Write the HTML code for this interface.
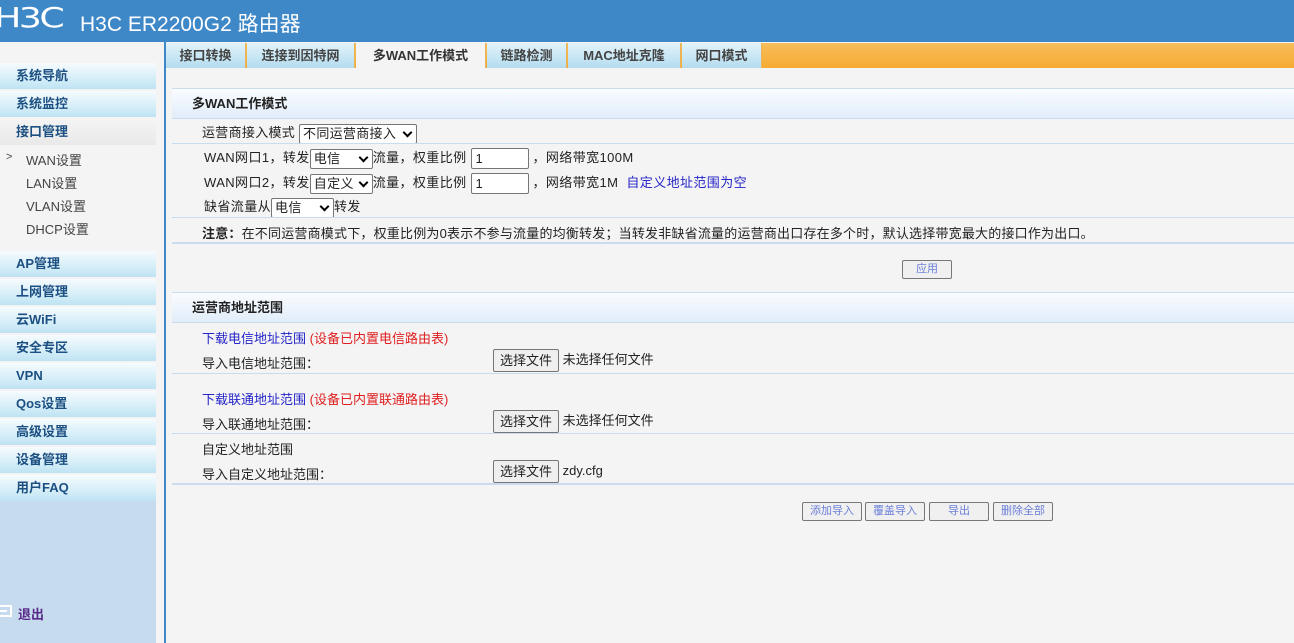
<!DOCTYPE html>
<html><head><meta charset="utf-8"><style>
*{margin:0;padding:0;box-sizing:border-box}
body{width:1294px;height:643px;overflow:hidden;background:#f4f4f4;font-family:"Liberation Sans","Noto Sans CJK SC",sans-serif;font-size:13px;color:#222;position:relative}
.a{position:absolute;white-space:nowrap}
#hd{left:0;top:0;width:1294px;height:42px;background:#3f88c8}
#sb{left:0;top:42px;width:156px;height:601px;background:#f4f4f4}
.mi{position:absolute;left:0;width:156px;height:26px;background:linear-gradient(#f6fbfe,#d5eef8 60%,#bfe3f3);color:#1c4f82;font-weight:bold;padding-left:16px;line-height:26px;font-size:13px}
.si{position:absolute;left:26px;color:#444;font-size:13px}
#vl{left:164px;top:42px;width:2px;height:601px;background:#3f88c8}
.tab{position:absolute;top:43px;height:25px;background:linear-gradient(#e3f3fa,#b3dcef);color:#444;font-weight:bold;text-align:center;line-height:25px;border-right:1px solid #e8b35a}
.pn{position:absolute;left:172px;width:1122px;border-top:1px solid #c8dcee}
.ph{height:30px;background:linear-gradient(#fafcff,#e1edfa);font-weight:bold;padding-left:20px;line-height:30px;border-bottom:1px solid #c8dcee;font-size:13px}
.ln{position:absolute;left:172px;width:1122px;height:1px;background:#c8dcee}
.sel{display:inline-block;border:1px solid #767676;border-radius:2px;background:#fff;height:20px;line-height:18px;padding-left:3px;vertical-align:middle;position:relative}
.sel:after{content:"";position:absolute;right:5px;top:4px;width:5px;height:5px;border-right:2px solid #000;border-bottom:2px solid #000;transform:rotate(45deg)}
.inp{display:inline-block;border:1px solid #767676;background:#fff;height:21px;width:58px;line-height:19px;padding-left:4px;vertical-align:middle;border-radius:2px}
.btn{position:absolute;border:1px solid #777;border-radius:2px;background:#f0f0f0;color:#6c7fd8;font-size:11px;text-align:center;line-height:17px;height:19px}
.fb{display:inline-block;border:1px solid #767676;border-radius:2px;background:#efefef;padding:0 6px;height:23px;line-height:21px;vertical-align:middle}
</style></head><body>
<div id="hd" class="a">
 <div class="a" style="left:-6px;top:1px;color:#fff;font-size:28px;transform:scaleX(1.3);transform-origin:left;font-family:'DejaVu Sans',sans-serif;letter-spacing:-2px">H3C</div>
 <div class="a" style="left:80px;top:8px;color:#fff;font-size:21px">H3C ER2200G2 路由器</div>
</div>
<div id="sb" class="a">
 <div class="a" style="left:0;top:458px;width:156px;height:143px;background:#c6dbee"></div>
 <div class="mi" style="top:21px">系统导航</div>
 <div class="mi" style="top:49px">系统监控</div>
 <div class="mi" style="top:77px;background:linear-gradient(#f4f4f4,#e9e9e9);">接口管理</div>
 <div class="si" style="left:6px;top:109px;font-size:11px">&gt;</div>
 <div class="si" style="top:108px">WAN设置</div>
 <div class="si" style="top:131px">LAN设置</div>
 <div class="si" style="top:154px">VLAN设置</div>
 <div class="si" style="top:177px">DHCP设置</div>
 <div class="mi" style="top:209px">AP管理</div>
 <div class="mi" style="top:237px">上网管理</div>
 <div class="mi" style="top:265px">云WiFi</div>
 <div class="mi" style="top:293px">安全专区</div>
 <div class="mi" style="top:321px">VPN</div>
 <div class="mi" style="top:349px">Qos设置</div>
 <div class="mi" style="top:377px">高级设置</div>
 <div class="mi" style="top:405px">设备管理</div>
 <div class="mi" style="top:433px">用户FAQ</div>
 <div class="a" style="left:0;top:563px;width:12px;height:12px;border:2px solid #fff;border-left:none"></div>
 <div class="a" style="left:0;top:568px;width:7px;height:2px;background:#fff"></div>
 <div class="a" style="left:18px;top:562px;color:#5a2a8a;font-weight:bold;font-size:13px">退出</div>
</div>
<div id="vl" class="a"></div>
<div class="a" style="left:166px;top:43px;width:1128px;height:25px;background:linear-gradient(#f8bd5a,#f6ab32)"></div>
<div class="tab" style="left:166px;width:80px">接口转换</div>
<div class="tab" style="left:247px;width:108px">连接到因特网</div>
<div class="tab" style="left:356px;width:130px;background:#f4f4f4;color:#333">多WAN工作模式</div>
<div class="tab" style="left:487px;width:80px">链路检测</div>
<div class="tab" style="left:568px;width:113px">MAC地址克隆</div>
<div class="tab" style="left:682px;width:80px">网口模式</div>

<div class="pn" style="top:88px"><div class="ph">多WAN工作模式</div></div>
<div class="a" style="left:202px;top:122px;letter-spacing:0.3px">运营商接入模式 <span class="sel" style="width:118px">不同运营商接入</span></div>
<div class="ln" style="top:143px"></div>
<div class="a" style="left:204px;top:147px;letter-spacing:0.4px">WAN网口1，转发<span class="sel" style="width:63px">电信</span>流量，权重比例 <span class="inp">1</span> ，网络带宽100M</div>
<div class="a" style="left:204px;top:172px;letter-spacing:0.4px">WAN网口2，转发<span class="sel" style="width:63px">自定义</span>流量，权重比例 <span class="inp">1</span> ，网络带宽1M &nbsp;<span style="color:#2525c8">自定义地址范围为空</span></div>
<div class="a" style="left:204px;top:196px;letter-spacing:0.4px">缺省流量从<span class="sel" style="width:63px">电信</span>转发</div>
<div class="ln" style="top:217px"></div>
<div class="a" style="left:202px;top:223px;letter-spacing:0.2px"><b>注意：</b>在不同运营商模式下，权重比例为0表示不参与流量的均衡转发；当转发非缺省流量的运营商出口存在多个时，默认选择带宽最大的接口作为出口。</div>
<div class="ln" style="top:242px;height:2px"></div>
<div class="btn" style="left:902px;top:260px;width:50px">应用</div>

<div class="pn" style="top:292px"><div class="ph">运营商地址范围</div></div>
<div class="a" style="left:202px;top:328px"><span style="color:#2525c8">下载电信地址范围</span> <span style="color:#e02020">(设备已内置电信路由表)</span></div>
<div class="a" style="left:202px;top:353px">导入电信地址范围：</div>
<div class="a" style="left:493px;top:349px"><span class="fb">选择文件</span> 未选择任何文件</div>
<div class="ln" style="top:373px"></div>
<div class="a" style="left:202px;top:389px"><span style="color:#2525c8">下载联通地址范围</span> <span style="color:#e02020">(设备已内置联通路由表)</span></div>
<div class="a" style="left:202px;top:414px">导入联通地址范围：</div>
<div class="a" style="left:493px;top:410px"><span class="fb">选择文件</span> 未选择任何文件</div>
<div class="ln" style="top:433px"></div>
<div class="a" style="left:202px;top:439px">自定义地址范围</div>
<div class="a" style="left:202px;top:464px">导入自定义地址范围：</div>
<div class="a" style="left:493px;top:460px"><span class="fb">选择文件</span> zdy.cfg</div>
<div class="ln" style="top:483px;height:2px"></div>
<div class="btn" style="left:802px;top:502px;width:60px">添加导入</div>
<div class="btn" style="left:865px;top:502px;width:60px">覆盖导入</div>
<div class="btn" style="left:929px;top:502px;width:60px">导出</div>
<div class="btn" style="left:993px;top:502px;width:60px">删除全部</div>
</body></html>
